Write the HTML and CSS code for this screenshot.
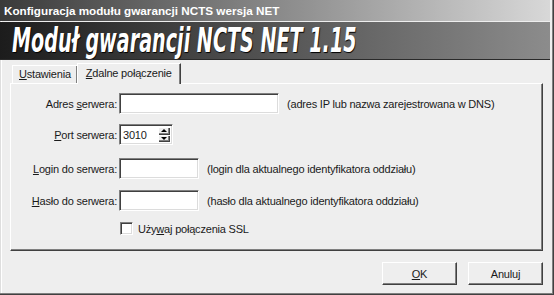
FILE: index.html
```html
<!DOCTYPE html>
<html lang="pl">
<head>
    <meta charset="UTF-8">
    <title>Konfiguracja modułu gwarancji NCTS wersja NET</title>
    <link rel="stylesheet" href="styles.css">
</head>
<body>
<div class="window">
    <div class="titlebar">Konfiguracja modułu gwarancji NCTS wersja NET</div>
    <div class="banner"><span class="banner-text">Moduł gwarancji NCTS NET 1.15</span></div>

    <div class="tabs">
        <div class="tab"><u>U</u>stawienia</div>
        <div class="tab active"><u>Z</u>dalne połączenie</div>
    </div>

    <div class="panel">
        <div class="row row-adres">
            <span class="label">Adres <u>s</u>erwera:</span>
            <span class="field field-adres"></span>
            <span class="hint">(adres IP lub nazwa zarejestrowana w DNS)</span>
        </div>
        <div class="row row-port">
            <span class="label"><u>P</u>ort serwera:</span>
            <span class="field field-port">3010
                <span class="spin">
                    <span class="spin-btn"><i class="arrow-up"></i></span>
                    <span class="spin-btn"><i class="arrow-down"></i></span>
                </span>
            </span>
        </div>
        <div class="row row-login">
            <span class="label"><u>L</u>ogin do serwera:</span>
            <span class="field field-short"></span>
            <span class="hint">(login dla aktualnego identyfikatora oddziału)</span>
        </div>
        <div class="row row-haslo">
            <span class="label"><u>H</u>asło do serwera:</span>
            <span class="field field-short"></span>
            <span class="hint">(hasło dla aktualnego identyfikatora oddziału)</span>
        </div>
        <div class="row row-ssl">
            <span class="label"></span>
            <span class="checkbox"></span>
            <span class="check-label">Uży<u>w</u>aj połączenia SSL</span>
        </div>
    </div>

    <div class="buttons">
        <button class="btn"><u>O</u>K</button>
        <button class="btn">Anuluj</button>
    </div>
</div>
</body>
</html>
```

FILE: styles.css
```css
body { margin: 0; font-family: "Liberation Sans", Arial, sans-serif; font-size: 11px; letter-spacing: -0.2px; color: #1a1a1a; }

.window { width: 554px; height: 295px; box-sizing: border-box; padding-right: 4px; background: #eeeeee; display: flex; flex-direction: column;
    box-shadow: inset -1px -1px #404040, inset -2px -2px #808080, inset 1px 0 #dedede, inset 2px 0 #fff; }

.titlebar { height: 21px; line-height: 21px; padding-left: 4px; color: #fff; font-weight: bold; font-size: 11.7px; letter-spacing: 0; white-space: nowrap;
    background: linear-gradient(to right, #3a3a3a, #d8d8d8); }

.banner { margin-top: 1px; height: 37px; border-bottom: 1px solid #2a2a2a; overflow: hidden; white-space: nowrap;
    background: linear-gradient(to right, #1c1c1c, #8c8c8c); }
.banner-text { display: inline-block; margin: 2px 0 0 12px; color: #fff; font-family: "DejaVu Sans Condensed", "DejaVu Sans", sans-serif;
    font-weight: bold; font-style: italic; font-size: 33px; line-height: 34px; letter-spacing: 0; transform: scaleX(0.645); transform-origin: left center;
    text-shadow: 1px 1px 1px #000; }

.tabs { display: flex; align-items: flex-end; height: 20px; margin-top: 3px; padding-left: 12px; }
.tab { height: 18px; line-height: 17px; padding: 0 6px; box-sizing: border-box; background: #eeeeee; white-space: nowrap;
    border-top: 1px solid #fff; border-left: 1px solid #fff; border-right: 1px solid #404040; box-shadow: inset -1px 0 #808080; }
.tab.active { position: relative; height: 21px; margin-bottom: -1px; margin-left: -1px; padding: 0 8px; line-height: 19px; z-index: 1; }

.panel { margin-left: 10px; width: 533px; height: 168px; box-sizing: border-box; padding-top: 9px;
    border: 1px solid; border-color: #fff #404040 #404040 #fff; box-shadow: inset -1px -1px #808080; }

.row { display: flex; align-items: center; height: 21px; }
.row-port { margin-top: 10px; }
.row-login { margin-top: 13px; }
.row-haslo { margin-top: 11px; }
.row-ssl { margin-top: 7px; }

.label { width: 106px; margin-right: 2px; text-align: right; white-space: nowrap; }
.hint { margin-left: 8px; white-space: nowrap; }

.field { height: 21px; box-sizing: border-box; background: #fff; display: flex; align-items: center; padding-left: 3px;
    border: 1px solid; border-color: #808080 #fff #fff #808080; box-shadow: inset 1px 1px #404040, inset -1px -1px #dcdcdc; }
.field-adres { width: 160px; }
.field-short { width: 80px; }
.field-port { width: 54px; justify-content: space-between; padding-right: 2px; }

.spin { display: flex; flex-direction: column; width: 12px; height: 15px; }
.spin-btn { flex: 1; display: flex; align-items: center; justify-content: center; background: #eeeeee;
    box-shadow: inset 1px 1px #fff, inset -1px -1px #404040, inset -2px -2px #808080; }
.arrow-up { width: 0; height: 0; border-left: 3px solid transparent; border-right: 3px solid transparent; border-bottom: 3px solid #000; }
.arrow-down { width: 0; height: 0; border-left: 3px solid transparent; border-right: 3px solid transparent; border-top: 3px solid #000; }

.checkbox { width: 13px; height: 13px; box-sizing: border-box; background: #fff; margin-left: 1px;
    border: 1px solid; border-color: #808080 #fff #fff #808080; box-shadow: inset 1px 1px #404040, inset -1px -1px #dcdcdc; }
.check-label { margin-left: 5px; white-space: nowrap; }

.buttons { display: flex; justify-content: flex-end; gap: 11px; margin-top: 11px; padding-right: 7px; }
.btn { width: 75px; height: 23px; padding: 0; background: #eeeeee; font: inherit; letter-spacing: inherit; color: #1a1a1a;
    border: 1px solid; border-color: #fff #404040 #404040 #fff; box-shadow: inset -1px -1px #808080; }
```
